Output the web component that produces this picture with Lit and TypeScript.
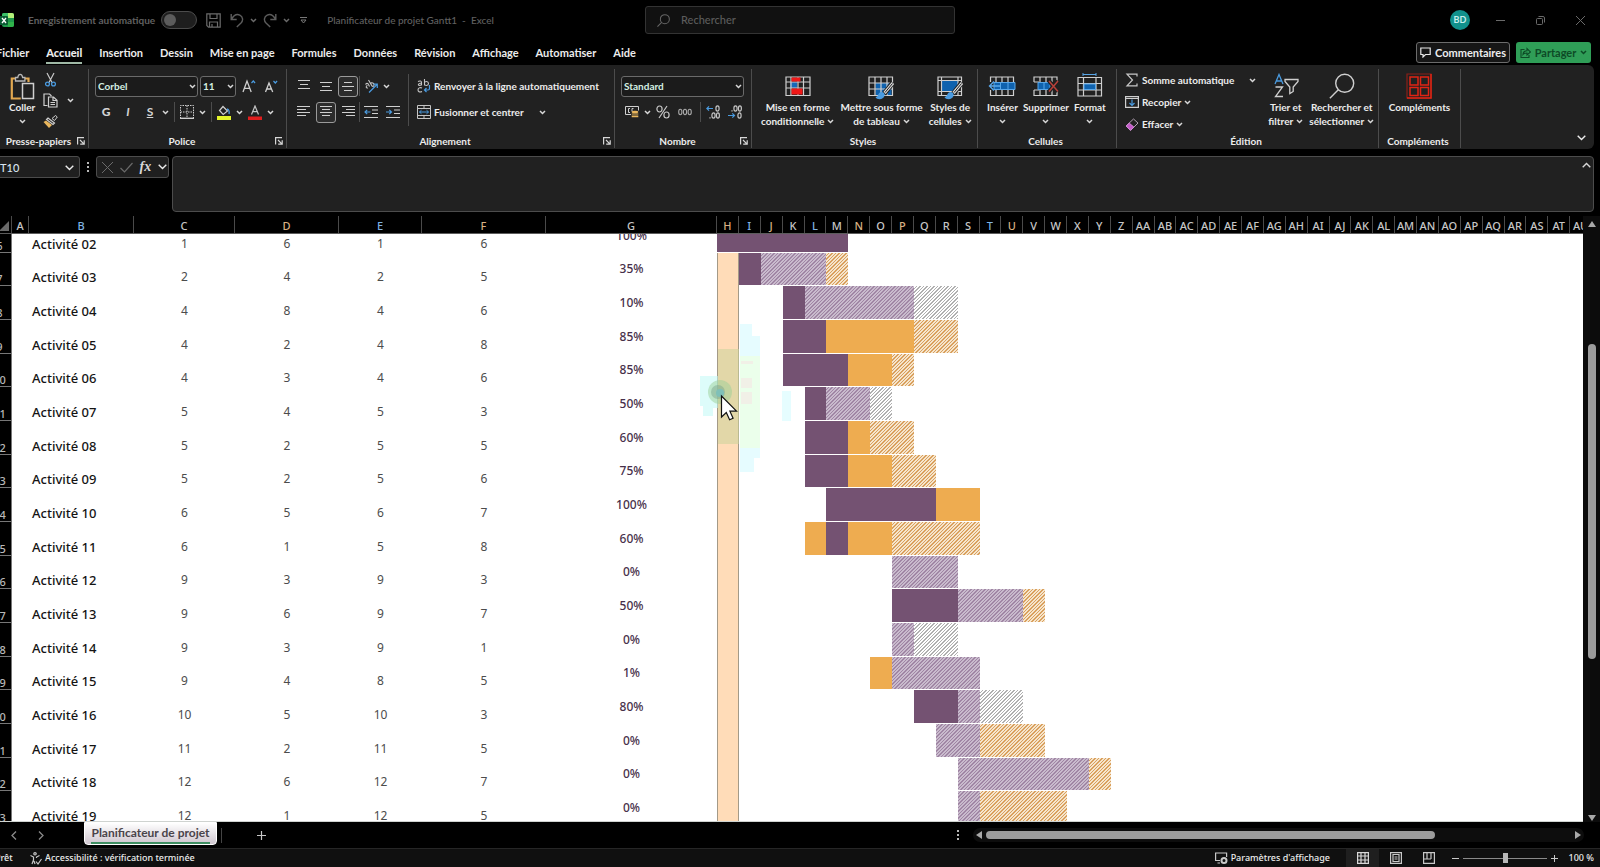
import { LitElement, html, css, nothing, TemplateResult } from "lit";
import { customElement } from "lit/decorators.js";
import { styleMap } from "lit/directives/style-map.js";

type Kind = "done" | "plan" | "over" | "late" | "grey";
type Seg = [Kind, number, number];
interface Task {
  name: string;
  values: number[];
  pct: string;
  segs: Seg[];
}

const TASKS: Task[] = [
  { name: "Activité 02", values: [1, 6, 1, 6], pct: "100%", segs: [["done", 0, 6]] },
  { name: "Activité 03", values: [2, 4, 2, 5], pct: "35%", segs: [["done", 1, 2], ["plan", 2, 5], ["late", 5, 6]] },
  { name: "Activité 04", values: [4, 8, 4, 6], pct: "10%", segs: [["done", 3, 4], ["plan", 4, 9], ["grey", 9, 11]] },
  { name: "Activité 05", values: [4, 2, 4, 8], pct: "85%", segs: [["done", 3, 5], ["over", 5, 9], ["late", 9, 11]] },
  { name: "Activité 06", values: [4, 3, 4, 6], pct: "85%", segs: [["done", 3, 6], ["over", 6, 8], ["late", 8, 9]] },
  { name: "Activité 07", values: [5, 4, 5, 3], pct: "50%", segs: [["done", 4, 5], ["plan", 5, 7], ["grey", 7, 8]] },
  { name: "Activité 08", values: [5, 2, 5, 5], pct: "60%", segs: [["done", 4, 6], ["over", 6, 7], ["late", 7, 9]] },
  { name: "Activité 09", values: [5, 2, 5, 6], pct: "75%", segs: [["done", 4, 6], ["over", 6, 8], ["late", 8, 10]] },
  { name: "Activité 10", values: [6, 5, 6, 7], pct: "100%", segs: [["done", 5, 10], ["over", 10, 12]] },
  { name: "Activité 11", values: [6, 1, 5, 8], pct: "60%", segs: [["over", 4, 5], ["done", 5, 6], ["over", 6, 8], ["late", 8, 12]] },
  { name: "Activité 12", values: [9, 3, 9, 3], pct: "0%", segs: [["plan", 8, 11]] },
  { name: "Activité 13", values: [9, 6, 9, 7], pct: "50%", segs: [["done", 8, 11], ["plan", 11, 14], ["late", 14, 15]] },
  { name: "Activité 14", values: [9, 3, 9, 1], pct: "0%", segs: [["plan", 8, 9], ["grey", 9, 11]] },
  { name: "Activité 15", values: [9, 4, 8, 5], pct: "1%", segs: [["over", 7, 8], ["plan", 8, 12]] },
  { name: "Activité 16", values: [10, 5, 10, 3], pct: "80%", segs: [["done", 9, 11], ["plan", 11, 12], ["grey", 12, 14]] },
  { name: "Activité 17", values: [11, 2, 11, 5], pct: "0%", segs: [["plan", 10, 12], ["late", 12, 15]] },
  { name: "Activité 18", values: [12, 6, 12, 7], pct: "0%", segs: [["plan", 11, 17], ["late", 17, 18]] },
  { name: "Activité 19", values: [12, 1, 12, 5], pct: "0%", segs: [["plan", 11, 12], ["late", 12, 16]] },
];

const columnName = (i: number): string =>
  i < 26 ? String.fromCharCode(65 + i) : "A" + String.fromCharCode(65 + i - 26);
const COLUMNS = Array.from({ length: 47 }, (_, i) => columnName(i));
const WARM = new Set(["D", "F", "H", "J", "N", "P", "U"]);
const COOL = new Set(["B", "E", "I", "L", "T"]);
const tint = (c: string) => (WARM.has(c) ? "warm" : COOL.has(c) ? "cool" : "");

const TABS = ["Fichier", "Accueil", "Insertion", "Dessin", "Mise en page", "Formules", "Données", "Révision", "Affichage", "Automatiser", "Aide"];

const chev = html`<svg class="chev" width="7" height="5" viewBox="0 0 7 5" fill="none" stroke="currentColor" stroke-width="1.5"><path d="M1 1l2.500 2.500L6 1"/></svg>`;
const bigChev = html`<svg width="9" height="6" viewBox="0 0 9 6" fill="none" stroke="currentColor" stroke-width="1.400"><path d="M.7 .8l3.800 3.800L8.300 .8"/></svg>`;
const launcher = html`<button class="launch" aria-label="Options"><svg width="8" height="8" viewBox="0 0 8 8" fill="none" stroke="#d8d8d8" stroke-width="1.200"><path d="M.6 7.400V.6H7"/><path d="M3 3l3.600 3.600M7.200 3.200v4H3.200"/></svg></button>`;

const I = {
  excel: html`<svg width="14" height="16" viewBox="0 0 14 16"><rect x="2" y="1" width="12" height="14" rx="2" fill="#1f9a4c"/><path d="M4 1h4v5H2V3a2 2 0 0 1 2-2z" fill="#3cc168"/><path d="M8 1h4a2 2 0 0 1 2 2v3H8z" fill="#b4f07a"/><path d="M8 10h6v3a2 2 0 0 1-2 2H8z" fill="#2fb34a"/><rect x="-3" y="4" width="11" height="9" rx="1" fill="#0a5c33"/><path d="M2 6l4 5M6 6l-4 5" stroke="#fff" stroke-width="1.300"/></svg>`,
  save: html`<svg width="15" height="15" viewBox="0 0 15 15" fill="none" stroke="#6b6b6b" stroke-width="1.200"><path d="M.8.800h13.400v13.400H2.500L.8 12.500z"/><path d="M4 1v4.500h7V1M3.500 14V9h8v5M6 14v-3"/></svg>`,
  undo: html`<svg width="14" height="15" viewBox="0 0 14 15" fill="none" stroke="#5c5c5c" stroke-width="1.400"><path d="M1.200 1v5.500h5.500M1.500 6.200C4 2 7 .8 9.800 2.200c3.300 1.800 3.600 5.300 1.200 7.800l-4.200 4"/></svg>`,
  redo: html`<svg width="14" height="15" viewBox="0 0 14 15" fill="none" stroke="#5c5c5c" stroke-width="1.400"><path d="M12.800 1v5.500H7.300M12.500 6.200C10 2 7 .8 4.200 2.200.900 4 .6 7.500 3 10l4.200 4"/></svg>`,
  search: (s: number, c: string) => html`<svg width=${s} height=${s} viewBox="0 0 24 24" fill="none" stroke=${c} stroke-width=${s > 20 ? 1.3 : 1.9}><circle cx="14.500" cy="9.500" r="8.300"/><path d="M8.600 15.400L.8 23.200"/></svg>`,
  paste: html`<svg width="25" height="28" viewBox="0 0 25 28" fill="none"><path d="M5 5.500H1.800v20h9M14.500 5.500h4v3.500" stroke="#e2a850" stroke-width="2.200"/><path d="M5.500 8V4.500h2.300C8 2.300 9 1.300 10.200 1.300s2.200 1 2.400 3.200h2.300V8z" stroke="#b8b8b8" stroke-width="1.300" fill="#212121"/><path d="M12.500 10.500h11v15h-11z" stroke="#cfcfcf" stroke-width="1.500" fill="#212121"/></svg>`,
  cut: html`<svg width="15" height="15" viewBox="-1.500 0 15 15" fill="none"><path d="M2.500 1l5 9.500M9.500 1l-5 9.500" stroke="#c8c8c8" stroke-width="1.200"/><circle cx="3" cy="12" r="1.900" stroke="#4a9be0" stroke-width="1.300"/><circle cx="9" cy="12" r="1.900" stroke="#4a9be0" stroke-width="1.300"/></svg>`,
  copy: html`<svg width="15" height="15" viewBox="0 0 15 15" fill="none" stroke="#cfcfcf" stroke-width="1.200"><path d="M4.500 12.500H1V1h5.500l2 2"/><path d="M5.500 4h5L14 7.300V14H5.500zM10 4v3.500h4M7.500 9.500h4.500M7.500 11.500h4.500"/></svg>`,
  brush: html`<svg width="15" height="13" viewBox="0 0 15 13"><path d="M9 3.500L12.500.5 14.300 2 11.500 5.500z" fill="none" stroke="#cfcfcf"/><path d="M5 3l6.500 5-1.500 1.500L3.500 4.500z" fill="none" stroke="#cfcfcf" stroke-width="1.200"/><path d="M3 5.500l6 4.500-3 3L.5 7z" fill="#e8b55c"/></svg>`,
  border: html`<svg width="14" height="14" viewBox="0 0 14 14" fill="none" stroke="#cfcfcf"><path d="M.5 13.500V.5h13v13M7 .5v13M.5 7h13" stroke-dasharray="1.500 1"/><path d="M0 13.300h14" stroke-width="1.400"/></svg>`,
  fill: html`<svg width="14" height="15" viewBox="0 0 14 15"><path d="M6 1.500l4.500 4.500-4.300 3.500-3.700-4z" fill="none" stroke="#cfcfcf" stroke-width="1.200"/><path d="M10 4c2 .5 2.500 3 2 5" fill="none" stroke="#4a9be0" stroke-width="1.400"/><rect y="11" width="14" height="4" fill="#e4f52a"/></svg>`,
  color: html`<svg width="14" height="15" viewBox="0 0 14 15"><path d="M3.500 9.500L7 1l3.500 8.500M4.700 6.700h4.600" fill="none" stroke="#c4c4c4" stroke-width="1.200"/><rect y="11.500" width="14" height="3.500" fill="#e01e1e"/></svg>`,
  grow: html`<svg width="14" height="14" viewBox="0 0 14 14" fill="none"><path d="M1 13L5 2l4.200 11M2.400 9.300h5.400" stroke="#cfcfcf" stroke-width="1.300"/><path d="M9.500 4L11.300 2l1.800 2" stroke="#4a9be0" stroke-width="1.200"/></svg>`,
  shrink: html`<svg width="14" height="14" viewBox="0 0 14 14" fill="none"><path d="M1.500 13L5 4l3.700 9M2.800 10h4.500" stroke="#cfcfcf" stroke-width="1.300"/><path d="M9.500 2l1.800 2 1.800-2" stroke="#4a9be0" stroke-width="1.200"/></svg>`,
  orient: html`<svg width="15" height="15" viewBox="0 0 15 15" fill="none"><path d="M1.500 5.500c1-1.500 2.500-1.500 3 0l1 2M3.500 6.500c-2 .5-1.500 3 .5 2.500M4.500 1l3.500 6c1.500 1 3-1 1.500-2.500s-2.500-.5-2.800 0" stroke="#c4c4c4" stroke-width="1.100"/><path d="M5 13.500l8-8M9.500 5.200h3.800v3.800" stroke="#4a9be0" stroke-width="1.200"/></svg>`,
  indentL: html`<svg width="14" height="14" viewBox="0 0 14 14" fill="none" stroke="#cfcfcf" stroke-width="1.200"><path d="M0 1.500h14M8 5h6M8 8.500h6M0 12.500h14"/><path d="M6.500 7H1M3.200 4.800L1 7l2.200 2.200" stroke="#4a9be0"/></svg>`,
  indentR: html`<svg width="14" height="14" viewBox="0 0 14 14" fill="none" stroke="#cfcfcf" stroke-width="1.200"><path d="M0 1.500h14M8 5h6M8 8.500h6M0 12.500h14"/><path d="M0 7h5.500M3.300 4.800L5.500 7 3.300 9.200" stroke="#4a9be0"/></svg>`,
  wrap: html`<svg width="14" height="14" viewBox="0 0 14 14" fill="none" stroke="#c4c4c4" stroke-width="1.100"><path d="M1 2.500c2-1 3.500-.5 3.500 1v3M4.500 4C1 4 .8 6.500 2.200 6.500S4.500 5.500 4.500 5.500M7.500 0v6.500M7.500 4c0-2 4-2 4 .500S7.500 7 7.500 5M5 9C3 8 1 9 1 11s2 2.500 4 1.500"/><path d="M12.500 6v3.500c0 1-.8 1.500-1.500 1.500H7.500M9.500 9L7.500 11l2 2" stroke="#4a9be0" stroke-width="1.200"/></svg>`,
  merge: html`<svg width="14" height="14" viewBox="0 0 14 14" fill="none" stroke="#c4c4c4"><path d="M.5.5h13v13H.5zM.5 3.500h13M.5 10.500h13M7 .5v3M7 10.500v3"/><path d="M2.500 7h9M4.500 5.200L2.500 7l2 1.800M9.500 5.200l2 1.800-2 1.800" stroke="#4a9be0"/></svg>`,
  money: html`<svg width="14" height="12" viewBox="0 0 14 12" fill="none"><path d="M6 8.500H.5v-8h13v4" stroke="#cfcfcf"/><path d="M5 2.500H3.500v4H5M8.500 2.500H7v3" stroke="#cfcfcf"/><ellipse cx="10" cy="6" rx="3.300" ry="1.300" fill="#e8b55c"/><path d="M6.700 7.500h6.600v1H6.700zM6.700 9.500h6.600v1.800H6.700z" fill="#e8b55c"/></svg>`,
  percent: html`<svg width="14" height="14" viewBox="0 0 14 14" fill="none" stroke="#c8c8c8" stroke-width="1.200"><ellipse cx="3.500" cy="4" rx="2.600" ry="3"/><ellipse cx="10.500" cy="10" rx="2.600" ry="3"/><path d="M11 1L3 13"/></svg>`,
  zeros: html`<svg width="14" height="8" viewBox="0 0 14 8" fill="none" stroke="#a8a8a8" stroke-width="1.100"><ellipse cx="2.300" cy="4" rx="1.600" ry="2.700"/><ellipse cx="7" cy="4" rx="1.600" ry="2.700"/><ellipse cx="11.700" cy="4" rx="1.600" ry="2.700"/></svg>`,
  decUp: html`<svg width="14" height="14" viewBox="0 0 14 14" fill="none" stroke="#c4c4c4" stroke-width="1.200"><path d="M7 3.500H.8M3 1.300L.8 3.500 3 5.700" stroke="#4a9be0"/><ellipse cx="11.500" cy="3.500" rx="1.600" ry="2.700"/><ellipse cx="7.500" cy="10.500" rx="1.600" ry="2.700"/><ellipse cx="11.900" cy="10.500" rx="1.500" ry="2.700"/><path d="M4 12.200v1.300"/></svg>`,
  decDown: html`<svg width="14" height="14" viewBox="0 0 14 14" fill="none" stroke="#c4c4c4" stroke-width="1.200"><path d="M0 10.500h6.500M4.300 8.300l2.200 2.200-2.200 2.200" stroke="#4a9be0"/><ellipse cx="7.500" cy="3.500" rx="1.600" ry="2.700"/><ellipse cx="11.900" cy="3.500" rx="1.500" ry="2.700"/><ellipse cx="11.500" cy="10.500" rx="1.600" ry="2.700"/><path d="M4 5.200v1.300"/></svg>`,
  condFormat: html`<svg width="26" height="28" viewBox="0 0 26 28"><path d="M5 9h7v6H5z" fill="#1768b8"/><path d="M1 4h24v18.500H1zM1 9h24M1 15h24M6 4v18M13 4v18M18.500 4v18" fill="none" stroke="#cfcfcf" stroke-width="1.200"/><path d="M6.500 4.500h9v4h-9zM6.500 15.500h11v6h-11z" fill="#f01818"/></svg>`,
  tableFormat: html`<svg width="27" height="28" viewBox="0 0 27 28"><path d="M7.500 10h16v13h-16z" fill="#0f62ae"/><path d="M1 4h23.500v18.500H1zM1 10h24M1 16h24M7 4v18M13 4v18M19 4v18" fill="none" stroke="#cfcfcf" stroke-width="1.200"/><path d="M25 9.500L16 21" stroke="#212121" stroke-width="5"/><path d="M25 10l-8.500 10" stroke="#d8d8d8" stroke-width="3"/><path d="M24.500 10.500L17 19.500" stroke="#212121"/><path d="M7.500 24c3 0 2.500-5 6-5s4 4 1.500 6-6.500 1.500-7.500-1z" fill="#4a9be0"/></svg>`,
  cellStyles: html`<svg width="27" height="28" viewBox="0 0 27 28"><path d="M5 8h16v10H5z" fill="#0f62ae"/><path d="M1 4h23.500v18.500H1zM4.500 4v18M21 4v18M1 7.500h24M1 18.500h24" fill="none" stroke="#cfcfcf" stroke-width="1.200"/><path d="M25 9.500L16 21" stroke="#212121" stroke-width="5"/><path d="M25 10l-8.500 10" stroke="#d8d8d8" stroke-width="3"/><path d="M24.500 10.500L17 19.500" stroke="#212121"/><path d="M7.500 24c3 0 2.500-5 6-5s4 4 1.500 6-6.500 1.500-7.500-1z" fill="#4a9be0"/></svg>`,
  insert: html`<svg width="28" height="28" viewBox="0 0 28 28" fill="none"><path d="M2.500 9V4h23v5M2.500 17v5.500h23V17M8 4v5M14 4v5M20 4v5M8 17v5M14 17v5M20 17v5" stroke="#cfcfcf" stroke-width="1.200"/><path d="M6 9.500h21v7H6z" fill="#0f62ae" stroke="#58a6e8"/><path d="M12.500 9.500v7M20 9.500v7" stroke="#58a6e8"/><path d="M13 13H1.500M6 8.500L1.500 13 6 17.500" stroke="#58a6e8" stroke-width="1.400"/></svg>`,
  remove: html`<svg width="26" height="28" viewBox="0 0 26 28" fill="none"><path d="M1 9V4h23v5M1 17v5.500h23V17M7 4v5M13 4v5M19 4v5M7 17v5M13 17v5M19 17v5M1 9h5M1 17h5" stroke="#cfcfcf" stroke-width="1.200"/><path d="M5 9.500h12v7H5z" fill="#0f62ae" stroke="#58a6e8"/><path d="M11 9.500v7" stroke="#58a6e8"/><path d="M16 8l9 10.500M25 8l-9 10.500" stroke="#212121" stroke-width="4"/><path d="M16 8l9 10.500M25 8l-9 10.500" stroke="#b8403a" stroke-width="1.500"/></svg>`,
  format: html`<svg width="26" height="28" viewBox="0 0 26 28" fill="none"><path d="M6 1.500h13M6 0v3M19 0v3" stroke="#58a6e8"/><path d="M1 4.500h23.500V23H1zM6.500 4.500V23M19 4.500V23M1 10.500h24M1 17h24" stroke="#cfcfcf" stroke-width="1.200"/><path d="M7 11h11.500v5.500H7z" fill="#0f62ae" stroke="#58a6e8"/></svg>`,
  sigma: html`<svg width="14" height="14" viewBox="0 0 14 14" fill="none" stroke="#c8c8c8" stroke-width="1.200"><path d="M12 3.500V1.200H2L7.500 7 2 12.800h10v-2.300"/></svg>`,
  fillDown: html`<svg width="14" height="12" viewBox="0 0 14 12" fill="none" stroke="#cfcfcf"><path d="M.6.6h12.800v10.800H.6zM.6 2.500h12.800" stroke-width="1.200"/><path d="M7 3.500v6M4.500 7L7 9.500 9.500 7" stroke="#4a9be0" stroke-width="1.200"/></svg>`,
  eraser: html`<svg width="14" height="13" viewBox="0 0 14 13" fill="none"><path d="M1 8l7.500-7 4.500 4-7.500 7.500z" stroke="#b0a0b0"/><path d="M1.300 8l3-2.800L8.800 9l-3.300 3.300z" fill="#c45ac8" stroke="#d88adc"/></svg>`,
  sort: html`<svg width="26" height="26" viewBox="0 0 26 26" fill="none"><path d="M2 11l4-9.500L10 11M3.300 8h5.400" stroke="#4a9be0" stroke-width="1.300"/><path d="M2.500 14h7L2.500 23.500h7.500" stroke="#cfcfcf" stroke-width="1.300"/><path d="M12 6.500h13v2l-4.800 5.500v4.500l-3.400 2v-6.500L12 8.500z" stroke="#cfcfcf" stroke-width="1.300"/></svg>`,
  addins: html`<svg width="26" height="26" viewBox="0 0 26 26" fill="none" stroke="#e02414"><path d="M1 1h24v24H1z" stroke="#8c2018" stroke-width="1.200"/><path d="M25 1v24H1" stroke-width="1.500"/><path d="M4 4h8v8H4zM14.500 4h8v8h-8zM4 14.500h8v8H4zM14.500 14.500h8v8h-8z" stroke-width="1.500"/></svg>`,
  comment: html`<svg width="11" height="11" viewBox="0 0 11 11" fill="none" stroke="#e8e8e8" stroke-width="1.200"><path d="M.8 1h9.400v6.500H5.500L3 10V7.500H.8z"/></svg>`,
  share: html`<svg width="11" height="11" viewBox="0 0 11 11" fill="none" stroke="#0d4a26" stroke-width="1.100"><path d="M4.500 2.500H1v8h8V8M3 7.500c.2-2.500 1.500-3.700 4-3.700V1.500l3.500 3.500L7 8V6C5.300 6 4 6.300 3 7.500z"/></svg>`,
};

@customElement("app-root")
export class AppRoot extends LitElement {
  static styles = css`
    :host {
      display: flex;
      flex-direction: column;
      height: 100vh;
      overflow: hidden;
      background: #000;
      color: #ececec;
      font-family: Lato, "Open Sans", sans-serif;
      font-size: 10px;
      line-height: 14px;
      font-weight: 700;
    }
    * { box-sizing: border-box; }
    button, input, select, textarea { font: inherit; color: inherit; background: none; border: 0; padding: 0; margin: 0; outline: none; }
    button { display: inline-flex; align-items: center; justify-content: center; white-space: nowrap; flex: none; }
    svg { display: block; flex: none; }
    .chev { color: #d8d8d8; }
    .grow { flex: 1; min-width: 0; }

    .title { display: flex; align-items: center; height: 40px; color: #606060; flex: none; }
    .auto { display: flex; align-items: center; gap: 6px; margin-left: 14px; font-weight: 700; white-space: nowrap; }
    .auto input { appearance: none; width: 36px; height: 18px; border: 1px solid #4c4c4c; border-radius: 9px; background: #1e1e1e; display: flex; align-items: center; padding-left: 2px; }
    .auto input::before { content: ""; width: 12px; height: 12px; border-radius: 6px; background: #5c5c5c; }
    .quick { display: flex; align-items: center; margin-left: 4px; }
    .quick button { width: 24px; height: 24px; }
    .quick button.dd { width: 9px; }
    .quick .chev { color: #6a6a6a; }
    .left { flex: 1; display: flex; align-items: center; min-width: 0; }
    .doc { margin-left: 12px; white-space: pre; font-weight: 500; }
    .search { display: flex; align-items: center; gap: 11px; width: 310px; height: 28px; border: 1px solid #333; border-radius: 3px; background: #111; padding: 0 11px; font-size: 11px; font-weight: 500; }
    .search input { flex: 1; min-width: 0; }
    .search input::placeholder { color: #5c5c5c; opacity: 1; }
    .right { flex: 1; display: flex; align-items: center; justify-content: flex-end; }
    .avatar { width: 20px; height: 20px; border-radius: 10px; background: #11918c; color: #c6eeec; font-size: 9px; margin-right: 10px; }
    .win { width: 40px; height: 30px; }

    .tabs { display: flex; align-items: center; height: 25px; gap: 17px; margin-left: -4px; padding-right: 9px; flex: none; font-size: 11px; }
    .tabs a { color: #ececec; text-decoration: none; height: 22px; line-height: 22px; white-space: nowrap; }
    .tabs a.on { font-weight: 900; border-bottom: 2px solid #9fb8a5; }
    .acts { display: flex; gap: 6px; margin-left: auto; font-size: 11px; }
    .acts button { height: 21px; border-radius: 3px; gap: 4px; }
    .acts .cmt { width: 94px; border: 1px solid #6c6c6c; background: #161616; }
    .acts .share { width: 75px; background: #2f9e57; color: #0d4a26; }
    .share .chev { color: #0d4a26; }

    .ribbon { display: flex; height: 84px; margin-right: 6px; background: #212121; border-radius: 0 6px 6px 0; padding: 4px 0 1px; flex: none; }
    .group { display: flex; flex-direction: column; border-right: 1px solid #4c4c4c; flex: none; }
    .body { display: flex; flex: 1; min-height: 0; }
    .foot { display: flex; align-items: center; height: 14px; padding-right: 3px; }
    .foot span { flex: 1; text-align: center; white-space: nowrap; }
    .launch { width: 8px; height: 14px; }
    .g1 { width: 89px; } .g2 { width: 198px; } .g3 { width: 328px; } .g4 { width: 137px; }
    .g5 { width: 226px; } .g6 { width: 139px; } .g7 { width: 262px; } .g8 { width: 82px; }

    .big { flex-direction: column; justify-content: flex-start; padding-top: 4px; }
    .big > .pic { height: 27px; display: flex; align-items: flex-start; }
    .big .ln { display: flex; align-items: center; gap: 3px; height: 14px; }
    .g1 .body { gap: 8px; padding-left: 9px; }
    .g5 .body { gap: 6px; padding-left: 9px; }
    .g6 .body { gap: 5px; padding-left: 9px; }
    .g7 .body { gap: 6px; padding-right: 8px; }
    .g8 .body { justify-content: center; }
    .stack { display: flex; flex-direction: column; align-items: flex-start; }
    .clip button { gap: 9px; height: 21px; }

    .rows { display: flex; flex-direction: column; gap: 4px; padding: 6px 0 0 6px; }
    .row { display: flex; align-items: center; height: 22px; }
    .ib { width: 22px; height: 21px; border-radius: 3px; }
    .ib.on { width: 20px; margin: 0 1px; border: 1px solid #9a9a9a; background: #2c2c2c; }
    .ib.glyph { font-size: 12px; color: #d4d4d4; }
    .dd { width: 9px; height: 21px; }
    .sep { width: 1px; height: 20px; background: #4c4c4c; margin: 0 1px 0 4px; }
    .sep.tight { margin: 0; }
    .vsep { width: 1px; background: #4c4c4c; margin: 5px 0 8px 4px; }
    .combo { position: relative; height: 21px; display: block; }
    .combo select { appearance: none; width: 100%; height: 100%; border: 1px solid #6a6a6a; border-radius: 3px; background: #1b1b1b; padding-left: 2px; color: #d5efe2; }
    .combo .chev { position: absolute; right: 2px; top: 8px; }
    .c-font { width: 103px; margin-right: 2px; }
    .c-size { width: 36px; margin-right: 2px; }
    .c-num { width: 123px; }
    .txt { gap: 3px; height: 22px; }
    .wide { padding-left: 8px; align-items: flex-start; }
    .wide .txt .chev { margin-left: 12px; }
    .edit { padding-left: 8px; }
    .far { margin-left: 12px; }
    .collapse { margin: auto 8px 7px auto; }

    .fbar { display: flex; align-items: flex-start; margin: 7px 6px 0 -4px; height: 56px; flex: none; }
    .name { position: relative; width: 84px; height: 22px; }
    .name input { width: 100%; height: 100%; border: 1px solid #4c4c4c; border-radius: 3px; background: #1f1f1f; padding-left: 3px; color: #d8e4f0; font-size: 11px; font-weight: 500; }
    .name svg { position: absolute; right: 6px; top: 9px; }
    .dots { width: 16px; height: 22px; display: flex; align-items: center; justify-content: center; }
    .fx { display: flex; align-items: center; justify-content: space-between; width: 73px; height: 22px; border: 1px solid #4c4c4c; border-radius: 3px; background: #1f1f1f; padding: 0 1px 0 5px; margin-right: 3px; }
    .fx i { font-family: "Liberation Serif", serif; font-size: 14px; font-weight: 700; color: #d8d8d8; }
    .formula { position: relative; flex: 1; height: 56px; }
    .formula textarea { display: block; width: 100%; height: 100%; resize: none; border: 1px solid #4c4c4c; border-radius: 4px; background: #212121; }
    .formula svg { position: absolute; right: 3px; top: 6px; }

    .sheet { flex: 1; min-height: 0; display: flex; margin-top: 4px; font-family: "Noto Sans", "Open Sans", sans-serif; }
    .view { position: relative; flex: 1; min-width: 0; overflow: hidden; border-bottom: 1px solid #cfd3d0; }
    table { display: block; margin: 0 -9px 0 -15px; }
    tr { display: grid; grid-template-columns: 27px 17px 105px 101px 104px 83px 124px 171px repeat(40, minmax(0, 1fr)); }
    thead { display: block; position: relative; z-index: 1; background: #000; border-bottom: 1px solid #5c5c5c; }
    thead tr { height: 17px; }
    th { padding: 0; font-weight: 500; }
    thead th { border-right: 1px solid #4a4a4a; font-size: 11px; line-height: 19px; color: #c6c6c6; text-align: center; white-space: nowrap; overflow: hidden; }
    thead th.warm { color: #d8b083; }
    thead th.cool { color: #7fb2e2; }
    thead th.corner { display: flex; justify-content: flex-end; align-items: flex-end; padding: 0 2px 2px 0; }
    tbody { display: grid; grid-template-rows: repeat(18, minmax(0, 1fr)); height: 606px; margin-top: -15px; background: #fff; }
    tbody th.num { background: #000; border-bottom: 1px solid #777; color: #b8b8b8; font-size: 11px; line-height: 12px; display: flex; align-items: flex-end; justify-content: center; padding-left: 3px; border-right: 1px solid #777; }
    td { padding: 0; }
    td { display: flex; justify-content: center; align-items: flex-end; padding-bottom: 1px; color: #4c4c4c; font-size: 12px; line-height: 16px; font-weight: 400; }
    td.label { justify-content: flex-start; padding-left: 3px; color: #141414; font-size: 13px; font-weight: 500; }
    td.pct { align-items: center; padding: 0; color: #47304a; font-weight: 500; }
    td.chart { grid-column: 9 / -1; display: grid; grid-template-columns: repeat(40, minmax(0, 1fr)); align-items: stretch; padding: 0; }
    .seg { grid-row: 1; margin-bottom: 1px; }
    .now { grid-row: 1; grid-column: 1; background: #ffdcb8; border: solid #a39a88; border-width: 0 1px; }
    .done { background: #745272; }
    .over { background: #eeac50; }
    .plan, .late, .grey { background-size: 7px 7px; }
    .plan { background-image: repeating-linear-gradient(-45deg, #a086a4 0 10%, #c9bbcd 10% 25%); }
    .late { background-image: repeating-linear-gradient(-45deg, #d9a05e 0 10%, #f6e5cc 10% 25%); }
    .grey { background-image: repeating-linear-gradient(-45deg, #b0b0b0 0 10%, #fff 10% 25%); }
    .pointer { position: absolute; left: 684px; top: 108px; pointer-events: none; }

    .vbar { width: 17px; display: flex; flex-direction: column; align-items: center; background: #0c0c0c; padding: 5px 0 1px; }
    .vbar .track { flex: 1; width: 8px; margin: 3px 0; display: flex; flex-direction: column; }
    .vbar .track::before { content: ""; flex: 113; }
    .vbar .track i { flex: 314; border-radius: 4px; background: #9c9c9c; }
    .vbar .track::after { content: ""; flex: 152; }

    .bottom { display: flex; align-items: center; height: 26px; flex: none; padding-left: 9px; }
    .nav { width: 10px; height: 20px; }
    .nav + .nav { margin-left: 17px; }
    .tab { align-self: flex-start; width: 133px; height: 23px; margin-left: 38px; border-radius: 0 0 4px 4px; background: linear-gradient(#fff, #cfc6cf); border: 1px solid #fff; color: #4a444a; font-size: 12px; }
    .tab span { border-bottom: 2px solid #3f8f62; line-height: 18px; }
    .div { width: 1px; height: 15px; background: #444; margin-left: 4px; }
    .plus { margin-left: 34px; width: 10px; height: 20px; }
    .hdots { margin-left: auto; width: 4px; }
    .hbar { flex: 0 0 611px; height: 14px; margin: 0 16px 0 12px; border-radius: 7px; background: #0d0d0d; display: flex; align-items: center; padding: 0 3px; gap: 4px; }
    .hbar .track { flex: 1; height: 8px; display: flex; }
    .hbar .track i { flex: 449; border-radius: 4px; background: #9c9c9c; }
    .hbar .track::after { content: ""; flex: 136; }

    .status { display: flex; align-items: center; height: 19px; background: #101010; border-top: 1px solid #262626; flex: none; font-family: "Noto Sans", "Open Sans", sans-serif; font-size: 9px; font-weight: 500; }
    .status .ready { margin-left: -5px; width: 35px; }
    .status button { gap: 3px; height: 18px; }
    .status .disp { margin-left: auto; margin-right: 16px; }
    .status .v { width: 33px; }
    .status .v.on { background: #1f1f1f; }
    .zoom { display: flex; align-items: center; margin: 0 6px 0 7px; }
    .zoom input { appearance: none; width: 84px; height: 12px; margin: 0 4px; background: linear-gradient(#8a8a8a, #8a8a8a) center / 100% 1px no-repeat; }
    .zoom input::-webkit-slider-thumb { appearance: none; width: 5px; height: 10px; background: #b8b8b8; }
    .zoom output { width: 36px; text-align: right; white-space: nowrap; }
  `;

  private iconBtn(name: string, pic: TemplateResult, on = false) {
    return html`<button class="ib ${on ? "on" : ""}" aria-label=${name}>${pic}</button>`;
  }
  private dd(name: string) {
    return html`<button class="dd" aria-label=${name}>${chev}</button>`;
  }
  private big(pic: TemplateResult, a: string, b: string, arrow = true) {
    return html`<button class="big"><span class="pic">${pic}</span><span class="ln">${a}</span><span class="ln">${b}${arrow ? chev : nothing}</span></button>`;
  }
  private foot(name: string, more = false) {
    return html`<div class="foot"><span>${name}</span>${more ? launcher : nothing}</div>`;
  }
  private al(rows: [number, number][], y = 1, step = 3) {
    const d = rows.map(([a, b], i) => `M${a} ${y + i * step + 0.5}H${b}`).join("");
    return html`<svg width="14" height="14" viewBox="0 0 14 14" stroke="#cfcfcf" stroke-width="1.200"><path d=${d}/></svg>`;
  }

  private ribbon() {
    return html`<section class="ribbon" aria-label="Ruban">
      <div class="group g1">
        <div class="body">
          ${this.big(I.paste, "Coller", "")}
          <div class="stack clip"><button aria-label="Couper">${I.cut}</button><button aria-label="Copier">${I.copy}${chev}</button><button aria-label="Reproduire la mise en forme">${I.brush}</button></div>
        </div>
        ${this.foot("Presse-papiers", true)}
      </div>
      <div class="group g2">
        <div class="body rows">
          <div class="row">
            <label class="combo c-font"><select aria-label="Police"><option>Corbel</option></select>${chev}</label>
            <label class="combo c-size"><select aria-label="Taille"><option>11</option></select>${chev}</label>
            ${this.iconBtn("Agrandir", I.grow)}${this.iconBtn("Réduire", I.shrink)}
          </div>
          <div class="row">
            <button class="ib glyph"><b>G</b></button><button class="ib glyph"><i>I</i></button><button class="ib glyph"><u>S</u></button>${this.dd("Soulignement")}
            <span class="sep"></span>${this.iconBtn("Bordures", I.border)}${this.dd("Types de bordures")}
            <span class="sep"></span>${this.iconBtn("Remplissage", I.fill)}${this.dd("Couleurs de remplissage")}
            ${this.iconBtn("Couleur de police", I.color)}${this.dd("Couleurs de police")}
          </div>
        </div>
        ${this.foot("Police", true)}
      </div>
      <div class="group g3">
        <div class="body">
          <div class="rows">
            <div class="row">
              ${this.iconBtn("Haut", this.al([[1, 13], [3, 11], [1, 13]], 1, 4))}${this.iconBtn("Milieu", this.al([[1, 13], [3, 11], [1, 13]], 3, 4))}${this.iconBtn("Bas", this.al([[3, 11], [1, 13], [3, 11]], 3, 4), true)}
              <span class="sep tight"></span>${this.iconBtn("Orientation", I.orient)}${this.dd("Orientations")}
            </div>
            <div class="row">
              ${this.iconBtn("Gauche", this.al([[0, 13], [0, 9], [0, 13], [0, 9]], 1, 3))}${this.iconBtn("Centre", this.al([[1, 13], [3, 11], [1, 13], [3, 11]], 1, 3), true)}${this.iconBtn("Droite", this.al([[1, 14], [5, 14], [1, 14], [5, 14]], 1, 3))}
              <span class="sep tight"></span>${this.iconBtn("Diminuer le retrait", I.indentL)}${this.iconBtn("Augmenter le retrait", I.indentR)}
            </div>
          </div>
          <span class="vsep"></span>
          <div class="rows wide">
            <button class="txt">${I.wrap}Renvoyer à la ligne automatiquement</button>
            <button class="txt">${I.merge}Fusionner et centrer${chev}</button>
          </div>
        </div>
        ${this.foot("Alignement", true)}
      </div>
      <div class="group g4">
        <div class="body rows">
          <div class="row"><label class="combo c-num"><select aria-label="Format de nombre"><option>Standard</option></select>${chev}</label></div>
          <div class="row">
            ${this.iconBtn("Comptabilité", I.money)}${this.dd("Devises")}${this.iconBtn("Pourcentage", I.percent)}${this.iconBtn("Milliers", I.zeros)}
            <span class="sep"></span>${this.iconBtn("Ajouter une décimale", I.decUp)}${this.iconBtn("Réduire les décimales", I.decDown)}
          </div>
        </div>
        ${this.foot("Nombre", true)}
      </div>
      <div class="group g5">
        <div class="body">${this.big(I.condFormat, "Mise en forme", "conditionnelle")}${this.big(I.tableFormat, "Mettre sous forme", "de tableau")}${this.big(I.cellStyles, "Styles de", "cellules")}</div>
        ${this.foot("Styles")}
      </div>
      <div class="group g6">
        <div class="body">${this.big(I.insert, "Insérer", "")}${this.big(I.remove, "Supprimer", "")}${this.big(I.format, "Format", "")}</div>
        ${this.foot("Cellules")}
      </div>
      <div class="group g7">
        <div class="body">
          <div class="stack edit">
            <button class="txt">${I.sigma}Somme automatique<span class="far">${chev}</span></button>
            <button class="txt">${I.fillDown}Recopier${chev}</button>
            <button class="txt">${I.eraser}Effacer${chev}</button>
          </div>
          <span class="grow"></span>${this.big(I.sort, "Trier et", "filtrer")}${this.big(I.search(26, "#cfcfcf"), "Rechercher et", "sélectionner")}
        </div>
        ${this.foot("Édition")}
      </div>
      <div class="group g8">
        <div class="body">${this.big(I.addins, "Compléments", "", false)}</div>
        ${this.foot("Compléments")}
      </div>
      <button class="collapse" aria-label="Réduire le ruban">${bigChev}</button>
    </section>`;
  }

  private taskRow(t: Task, i: number) {
    return html`<tr>
      <th class="num" scope="row">${i + 6}</th>
      <td></td>
      <td class="label">${t.name}</td>
      ${t.values.map((v) => html`<td>${v}</td>`)}
      <td class="pct">${t.pct}</td>
      <td class="chart">
        ${i > 0 ? html`<span class="now"></span>` : nothing}
        ${t.segs.map(([k, a, b]) => html`<span class="seg ${k}" style=${styleMap({ gridColumn: `${a + 1} / ${b + 1}` })}></span>`)}
      </td>
    </tr>`;
  }

  render() {
    return html`
      <header class="title">
        <div class="left">
          ${I.excel}
          <label class="auto">Enregistrement automatique<input type="checkbox" role="switch"></label>
          <div class="quick">
            <button aria-label="Enregistrer">${I.save}</button><button aria-label="Annuler">${I.undo}</button><button class="dd" aria-label="Annulations">${chev}</button>
            <button aria-label="Rétablir">${I.redo}</button><button class="dd" aria-label="Rétablissements">${chev}</button>
            <button aria-label="Personnaliser"><svg width="7" height="7" viewBox="0 0 7 7" fill="none" stroke="#777"><path d="M0 .5h7M1 3h5L3.500 6z"/></svg></button>
          </div>
          <span class="doc">Planificateur de projet Gantt1  -  Excel</span>
        </div>
        <label class="search">${I.search(13, "#666")}<input type="search" placeholder="Rechercher" aria-label="Rechercher"></label>
        <div class="right">
          <button class="avatar">BD</button>
          <button class="win" aria-label="Réduire"><svg width="9" height="9" stroke="#6a6a6a"><path d="M0 4.500h9"/></svg></button>
          <button class="win" aria-label="Restaurer"><svg width="9" height="9" viewBox="0 0 9 9" fill="none" stroke="#6a6a6a"><rect x=".5" y="2.500" width="6" height="6" rx="1"/><path d="M2.500.5H7a1.500 1.500 0 0 1 1.500 1.500v4.500"/></svg></button>
          <button class="win" aria-label="Fermer"><svg width="9" height="9" stroke="#6a6a6a"><path d="M0 0l9 9M9 0L0 9"/></svg></button>
        </div>
      </header>
      <nav class="tabs">
        ${TABS.map((t) => html`<a href="#" class=${t === "Accueil" ? "on" : ""}>${t}</a>`)}
        <div class="acts"><button class="cmt">${I.comment}Commentaires</button><button class="share">${I.share}Partager${chev}</button></div>
      </nav>
      ${this.ribbon()}
      <div class="fbar">
        <label class="name"><input value="T10" aria-label="Zone Nom">${bigChev}</label>
        <span class="dots"><svg width="3" height="11" fill="#b8b8b8"><path d="M0 0h2v2H0zM0 4h2v2H0zM0 8h2v2H0z"/></svg></span>
        <div class="fx">
          <button aria-label="Annuler la saisie"><svg width="11" height="11" stroke="#6a6a6a"><path d="M0 0l11 11M11 0L0 11"/></svg></button>
          <button aria-label="Valider"><svg width="13" height="11" fill="none" stroke="#6a6a6a" stroke-width="1.200"><path d="M.5 6L4.500 10 12.500 1"/></svg></button>
          <button aria-label="Insérer une fonction"><i>fx</i></button>
          <button aria-label="Développer">${bigChev}</button>
        </div>
        <label class="formula"><textarea aria-label="Barre de formule"></textarea><svg width="9" height="6" viewBox="0 0 9 6" fill="none" stroke="#d8d8d8" stroke-width="1.400"><path d="M.7 5.200L4.500 1.400 8.300 5.200"/></svg></label>
      </div>
      <main class="sheet">
        <div class="view">
          <table>
            <thead><tr>
              <th class="corner" aria-label="Tout sélectionner"><svg width="10" height="10" fill="#6a6a6a"><path d="M10 0v10H0z"/></svg></th>
              ${COLUMNS.map((c) => html`<th scope="col" class=${tint(c)}>${c}</th>`)}
            </tr></thead>
            <tbody>${TASKS.map((t, i) => this.taskRow(t, i))}</tbody>
          </table>
          <svg class="pointer" width="120" height="160" viewBox="0 0 120 160">
            <g opacity=".55">
              <path d="M56 0h12v12h8v24H56z" fill="#d2fbff"/><path d="M56 32h20v92H56z" fill="#dcffdc"/><path d="M56 124h20v10h-6v14H56z" fill="#d2fbff"/>
              <path d="M16 52h19v32h-6v8H19V82h-3z" fill="#c2fbf6"/><path d="M98 67h9v30h-9z" fill="#d2fbff"/><path d="M34 25h21v95H34z" fill="#cbd39b"/>
              <path d="M57 37h12v3H57zM57 54h11v10H57zM57 68h11v12H57z" fill="#e6e4d4"/>
            </g>
            <circle cx="36" cy="68" r="12" fill="#9ccf98" opacity=".5"/><circle cx="34" cy="68" r="7" fill="#7da890" opacity=".5"/><circle cx="36" cy="69" r="4" fill="#7fc0b8"/>
            <path d="M37.500 72v21l4.800-4.500 3.300 7.300 3.500-1.600-3.200-7h6.600z" fill="#fff" stroke="#111" stroke-width="1.200"/>
          </svg>
        </div>
        <div class="vbar"><svg width="8" height="6" fill="#a8a8a8"><path d="M4 0l4 6H0z"/></svg><span class="track"><i></i></span><svg width="8" height="6" fill="#a8a8a8"><path d="M0 0h8L4 6z"/></svg></div>
      </main>
      <div class="bottom">
        <button class="nav" aria-label="Feuille précédente"><svg width="6" height="9" fill="none" stroke="#8a8a8a" stroke-width="1.300"><path d="M5 .5l-4 4 4 4"/></svg></button>
        <button class="nav" aria-label="Feuille suivante"><svg width="6" height="9" fill="none" stroke="#8a8a8a" stroke-width="1.300"><path d="M1 .5l4 4-4 4"/></svg></button>
        <button class="tab"><span>Planificateur de projet</span></button><span class="div"></span>
        <button class="plus" aria-label="Nouvelle feuille"><svg width="9" height="9" stroke="#c8c8c8" stroke-width="1.200"><path d="M0 4.500h9M4.500 0v9"/></svg></button>
        <span class="hdots"><svg width="2" height="10" fill="#b8b8b8"><path d="M0 0h2v2H0zM0 4h2v2H0zM0 8h2v2H0z"/></svg></span>
        <div class="hbar"><svg width="6" height="8" fill="#a8a8a8"><path d="M6 0v8L0 4z"/></svg><span class="track"><i></i></span><svg width="6" height="8" fill="#a8a8a8"><path d="M0 0v8l6-4z"/></svg></div>
      </div>
      <footer class="status">
        <span class="ready">Prêt</span>
        <button><svg width="12" height="13" viewBox="0 0 12 13" fill="none" stroke="#c8c8c8" stroke-width="1.200"><circle cx="5" cy="1.800" r="1.200"/><path d="M.5 3.500L3.500 5v3L2 12M9.500 3.500L6.500 5v1M4 9l1 3M6 9.500l2 2.500 3.500-5"/></svg>Accessibilité : vérification terminée</button>
        <button class="disp"><svg width="13" height="12" viewBox="0 0 13 12" fill="none" stroke="#c8c8c8" stroke-width="1.200"><path d="M5 8.500H.6V1h11v4M2.500 11H5"/><circle cx="9" cy="8.500" r="2.500" stroke-width="2"/></svg>Paramètres d'affichage</button>
        <button class="v on" aria-label="Normal"><svg width="12" height="12" fill="none" stroke="#d8d8d8" stroke-width="1.200"><path d="M.6.6h10.800v10.800H.6zM4 .6v10.800M8 .6v10.800M.6 4h10.800M.6 8h10.800"/></svg></button>
        <button class="v" aria-label="Mise en page"><svg width="12" height="12" fill="none" stroke="#c8c8c8" stroke-width="1.200"><path d="M.6.6h10.800v10.800H.6zM3 2.500h6v7H3zM4.500 5h3M4.500 7h3"/></svg></button>
        <button class="v" aria-label="Aperçu des sauts de page"><svg width="12" height="12" fill="none" stroke="#c8c8c8" stroke-width="1.200"><path d="M.6.6h10.800v10.800H.6zM4 .6V7M8 .6V7M.6 7H8"/></svg></button>
        <div class="zoom">
          <button aria-label="Zoom arrière"><svg width="7" height="7" stroke="#c8c8c8"><path d="M0 3.500h7"/></svg></button>
          <input type="range" min="10" max="190" value="100" aria-label="Zoom">
          <button aria-label="Zoom avant"><svg width="7" height="7" stroke="#c8c8c8"><path d="M0 3.500h7M3.500 0v7"/></svg></button>
          <output>100 %</output>
        </div>
      </footer>
    `;
  }
}
